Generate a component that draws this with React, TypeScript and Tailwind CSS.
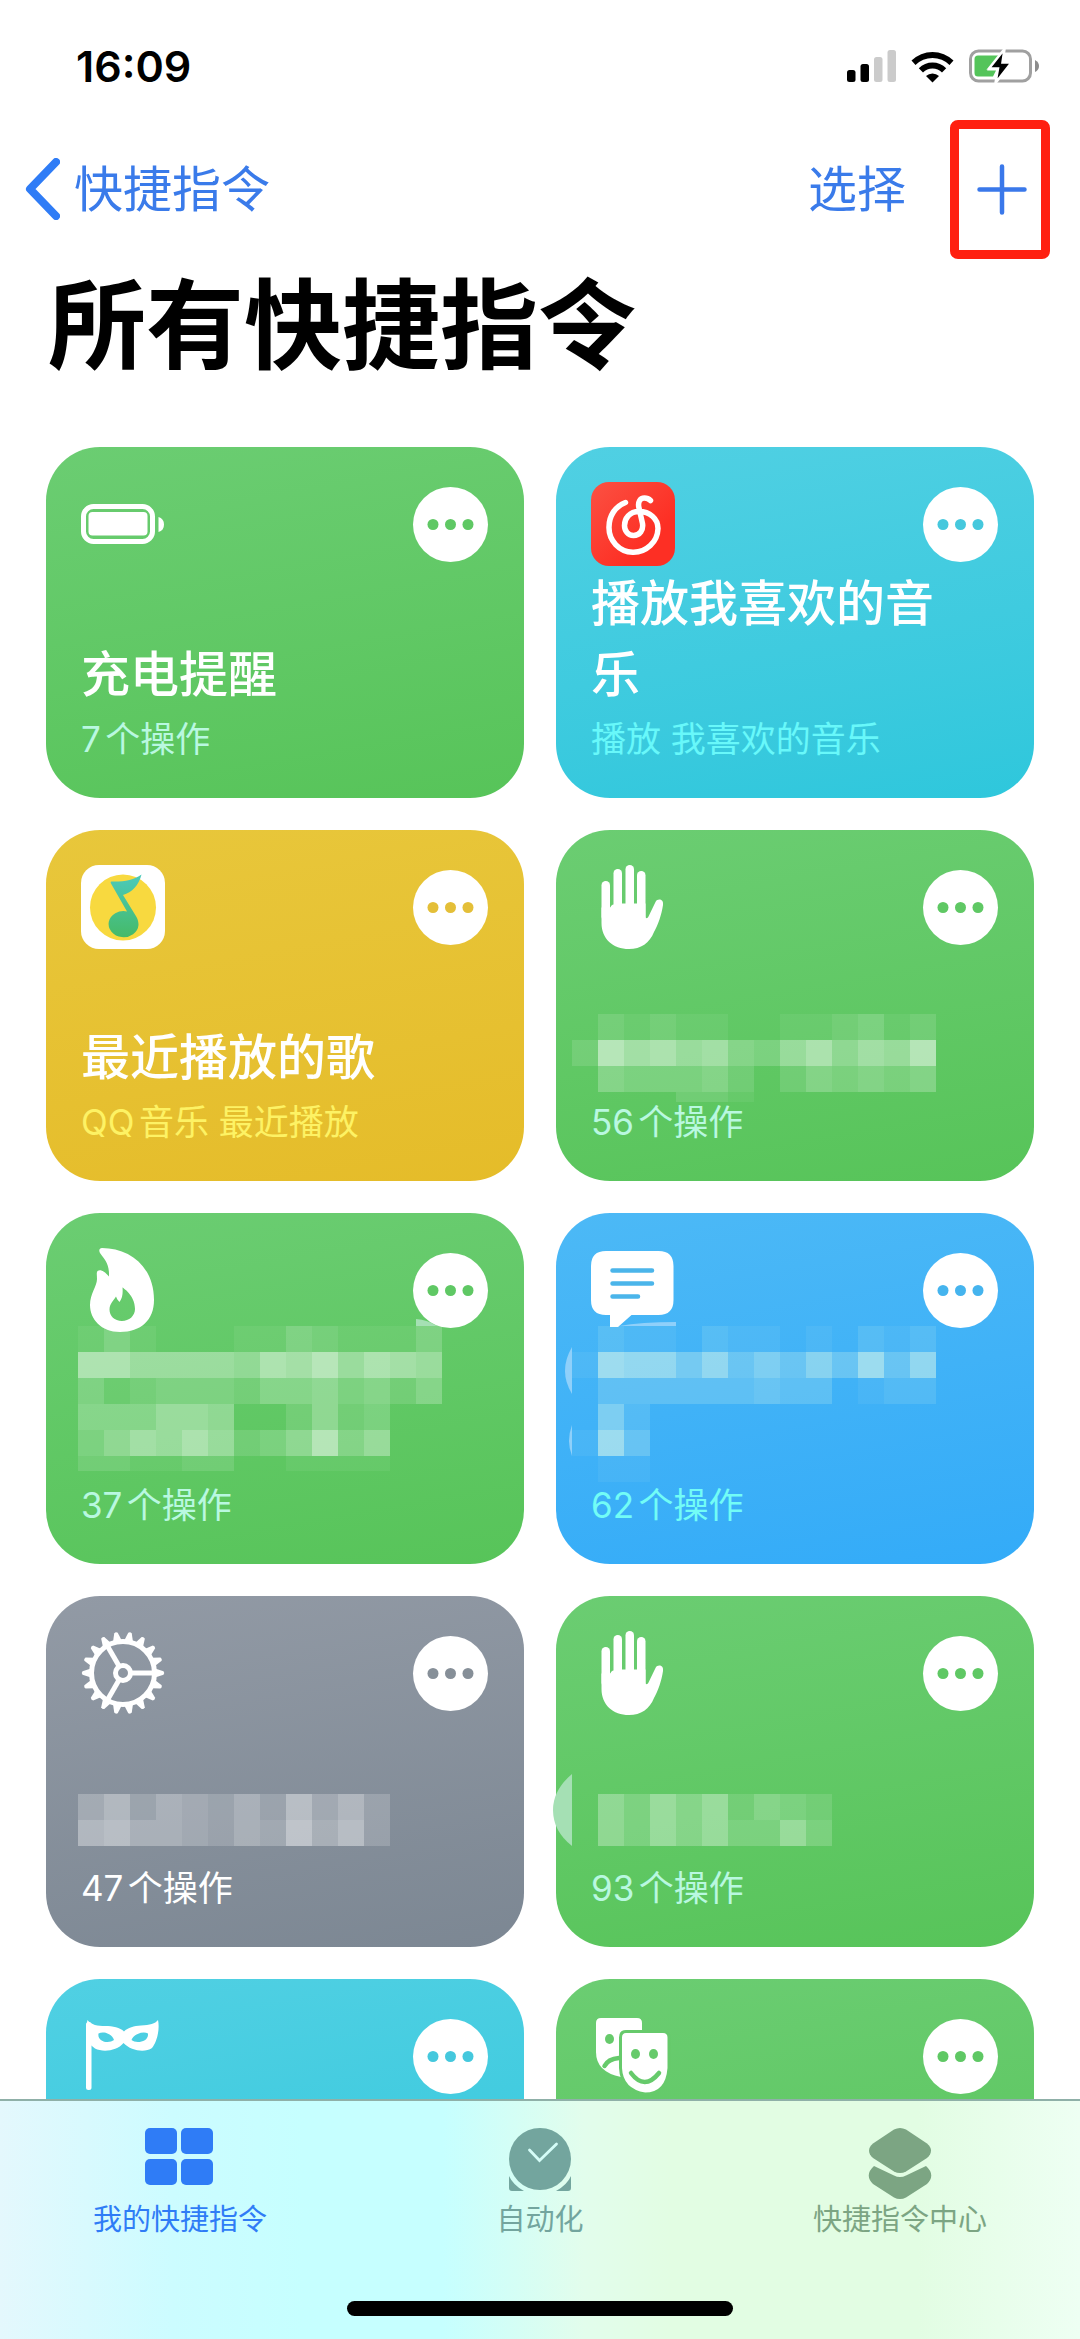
import type { ReactNode } from "react"

type Theme = "green" | "cyan" | "yellow" | "blue" | "gray"

type MosaicRow = { cells: string; height?: number }

type Mosaic = {
  x: number
  y: number
  tint: string
  rows: MosaicRow[]
  smudges?: string[]
}

type Shortcut = {
  id: string
  theme: Theme
  icon: ReactNode
  title?: string
  subtitle?: string
  mosaic?: Mosaic
}

const THEMES: Record<Theme, { card: string; dots: string; subtitle: string }> = {
  green: {
    card: "bg-linear-170 from-[#6bcd72] to-[#57c459]",
    dots: "text-[#5fc864]",
    subtitle: "text-[#b9f8e0]",
  },
  cyan: {
    card: "bg-linear-170 from-[#50d0e3] to-[#2ec7dc]",
    dots: "text-[#45c8dd]",
    subtitle: "text-[#68f8fa]",
  },
  yellow: {
    card: "bg-linear-170 from-[#e8c73b] to-[#e5bc29]",
    dots: "text-[#e4bf38]",
    subtitle: "text-[#fdf264]",
  },
  blue: {
    card: "bg-linear-170 from-[#4cb9f6] to-[#33abf8]",
    dots: "text-[#45b4ee]",
    subtitle: "text-[#72fcf6]",
  },
  gray: {
    card: "bg-linear-170 from-[#929aa5] to-[#7c8793]",
    dots: "text-[#868f98]",
    subtitle: "text-white",
  },
}

/* ---------- Card icons ---------- */

function CardIcon({ children }: { children: ReactNode }) {
  return (
    <svg viewBox="0 0 84 84" className="size-[84px] shrink-0" fill="#fff" aria-hidden="true">
      {children}
    </svg>
  )
}

const BatteryIcon = (
  <CardIcon>
    <rect x="2.5" y="24.5" width="69" height="35" rx="10" fill="none" stroke="#fff" strokeWidth="5" />
    <rect x="7.5" y="30" width="59" height="23.5" rx="4" />
    <path d="M77.5 35C81 36 83 38.500 83 42.500S81 49 77.500 50Z" />
  </CardIcon>
)

const NeteaseIcon = (
  <CardIcon>
    <defs>
      <linearGradient id="netease" x1="0" y1="0" x2="1" y2="1">
        <stop offset="0" stopColor="#fb5143" />
        <stop offset="0.7" stopColor="#fd2f24" />
      </linearGradient>
    </defs>
    <rect width="84" height="84" rx="18" fill="url(#netease)" />
    <path
      d="M34.500 20.500C24 24.500 18 34 18 45A24.500 24.500 0 0 0 67 46.500C67 36.500 58.500 29.500 48 29.500C38.500 29.500 33.500 36.500 33.500 43.500C33.500 49 37 53.500 42.500 53.500C49 53.500 52.500 48 51.500 41.500L48 26C46.500 20 49 16 53.500 16C56 16 58 17 59.500 18.500"
      fill="none"
      stroke="#fff"
      strokeWidth="5.500"
      strokeLinecap="round"
    />
  </CardIcon>
)

const QQMusicIcon = (
  <CardIcon>
    <defs>
      <linearGradient id="qqnote" x1="0" y1="0" x2="0" y2="1">
        <stop offset="0" stopColor="#4bcabc" />
        <stop offset="1" stopColor="#45ba68" />
      </linearGradient>
    </defs>
    <rect width="84" height="84" rx="18" />
    <circle cx="42" cy="42.500" r="33" fill="#f8d93f" />
    <path
      d="M30.500 16.500C42 17 53 15 60.500 9.500C58 20 51 27.500 42 30L55.500 52C57 55 57.500 57 57.500 60A15 13 0 1 1 46 46.500L30 18.500C29.500 17.500 29.500 16.500 30.500 16.500Z"
      fill="url(#qqnote)"
    />
  </CardIcon>
)

const HandIcon = (
  <CardIcon>
    <rect x="10.500" y="16" width="8.500" height="40" rx="4.200" />
    <rect x="22.500" y="4" width="8.500" height="50" rx="4.200" />
    <rect x="34.500" y="0" width="8.500" height="50" rx="4.200" />
    <rect x="46" y="6" width="8.500" height="50" rx="4.200" />
    <path d="M10.500 42.500H19C20 42.500 20 39.500 22.500 39.500L31 38.500H54.500V51C54.500 54 56.500 53.500 57.500 51.500L64.500 37C66.500 33 73 34 72 40C70.500 50 67 60 63 67C58.500 78 50 84 38 84C22 84 10.500 74 10.500 58Z" />
  </CardIcon>
)

const FlameIcon = (
  <CardIcon>
    <path
      fillRule="evenodd"
      d="M21 0C48 0 73 18 73 52C73 72 60 84 39 84C20 84 9 71 9 57C9 46 16 38 16 31C16 28 15.500 26 16 24C17 21 22 21 28 28.500C28.500 16 24 12 19 5C17.500 2 18.500 0 21 0ZM41.500 39.500C41.500 39.500 54 47 54 61C54 68 48 73 41 73C33.500 73 28.500 68 28.500 61.500C28.500 56 32 53 35 48.500C36 51 37 52.500 38.500 54C41.500 50 42 45 41.500 39.500Z"
    />
  </CardIcon>
)

const MessageIcon = (
  <CardIcon>
    <path d="M15 3H67.500Q82.500 3 82.500 18V52Q82.500 67 67.500 67H40.500L27 79H19V67H15Q0 67 0 52V18Q0 3 15 3Z" />
    <path d="M21.500 22.500H61M21.500 35.500H61M21.500 48.500H47" stroke="#4bb5ea" strokeWidth="4.500" strokeLinecap="round" />
  </CardIcon>
)

const GearIcon = (
  <CardIcon>
    <g fill="none" stroke="#fff">
      <circle cx="42" cy="42" r="31.500" strokeWidth="5" />
      <circle cx="42" cy="42" r="7.500" strokeWidth="5" />
      {[0, 120, 240].map((deg) => (
        <path key={deg} d="M50 42H72" strokeWidth="5" transform={`rotate(${deg} 42 42)`} />
      ))}
    </g>
    {Array.from({ length: 18 }, (_, i) => (
      <path
        key={i}
        d="M74 37.500L82.500 40.200Q84 42 82.500 43.800L74 46.500Z"
        transform={`rotate(${i * 20} 42 42)`}
      />
    ))}
  </CardIcon>
)

const MaskIcon = (
  <CardIcon>
    <rect x="5" y="8" width="5.500" height="68" rx="2.500" />
    <path
      fillRule="evenodd"
      d="M6.500 6C10 11 17 12 24 12C32 12 39 13.500 43 17.500C47 13.500 53 12 60 11.500C69 11 74 10 77 6C79 15 76 28 71 34C64 39 50 37 42.500 29C36 37 22 38.500 14 34.500L6 28Q4 14 6.500 6ZM17.500 19.500C23 17 31 20 33 26C28 30 16 28 17.500 19.500ZM67 19.500C62 17 53 20 50.500 26C55 30 68 28 67 19.500Z"
    />
  </CardIcon>
)

const TheaterIcon = (
  <CardIcon>
    <path d="M10 4H46Q51 4 51 9V40Q46 63 30 63Q5 58 5 38V9Q5 4 10 4Z" />
    <ellipse cx="18.500" cy="25" rx="4.500" ry="5" fill="#66ca6b" />
    <path d="M13.500 52Q17 45 28 44" fill="none" stroke="#66ca6b" strokeWidth="4.500" strokeLinecap="round" />
    <path
      d="M35 17.500H72Q78 17.500 78 23.500V54Q76 80 54 80Q30.500 76 29.500 54V23.500Q29.500 17.500 35 17.500Z"
      stroke="#66ca6b"
      strokeWidth="3"
    />
    <ellipse cx="44.500" cy="40" rx="4.500" ry="5" fill="#66ca6b" />
    <ellipse cx="62.500" cy="40" rx="4.500" ry="5" fill="#66ca6b" />
    <path d="M40 59Q53.500 77 68 59" fill="none" stroke="#66ca6b" strokeWidth="4.500" strokeLinecap="round" />
  </CardIcon>
)

/* ---------- Data ---------- */

const SHORTCUTS: Shortcut[] = [
  { id: "charge", theme: "green", icon: BatteryIcon, title: "充电提醒", subtitle: "7个操作" },
  { id: "netease", theme: "cyan", icon: NeteaseIcon, title: "播放我喜欢的音乐", subtitle: "播放 我喜欢的音乐" },
  { id: "qq", theme: "yellow", icon: QQMusicIcon, title: "最近播放的歌", subtitle: "QQ音乐 最近播放" },
  {
    id: "hand-1",
    theme: "green",
    icon: HandIcon,
    subtitle: "56个操作",
    mosaic: {
      x: 16,
      y: 184,
      tint: "#fff",
      rows: [
        { cells: "02121100112312" },
        { cells: "29786743685769" },
        { cells: "04333420243434" },
        { cells: "00002210000000", height: 10 },
      ],
    },
  },
  {
    id: "flame",
    theme: "green",
    icon: FlameIcon,
    subtitle: "37个操作",
    mosaic: {
      x: 32,
      y: 113,
      tint: "#fff",
      rows: [
        { cells: "13100011321113" },
        { cells: "88666658796876" },
        { cells: "31233324453424" },
        { cells: "444665002523" },
        { cells: "357686235946" },
        { cells: "221122001111", height: 15 },
      ],
      smudges: ["M370 106Q382 107 391 113H370Z"],
    },
  },
  {
    id: "message",
    theme: "blue",
    icon: MessageIcon,
    subtitle: "62个操作",
    mosaic: {
      x: 16,
      y: 113,
      tint: "#eaffe8",
      rows: [
        { cells: "02110211010212" },
        { cells: "19885846474948" },
        { cells: "03333334330122" },
        { cells: "062" },
        { cells: "194" },
        { cells: "011" },
      ],
      smudges: [
        "M16 134Q2 158 16 181Z",
        "M16 212Q10 228 16 243Z",
        "M63 113Q85 109 120 109V113Z",
      ],
    },
  },
  {
    id: "gear",
    theme: "gray",
    icon: GearIcon,
    subtitle: "47个操作",
    mosaic: {
      x: 32,
      y: 198,
      tint: "#fff",
      rows: [{ cells: "463543537463" }, { cells: "675543548573" }],
    },
  },
  {
    id: "hand-2",
    theme: "green",
    icon: HandIcon,
    subtitle: "93个操作",
    mosaic: {
      x: 42,
      y: 198,
      tint: "#fff",
      rows: [{ cells: "536462432" }, { cells: "536463363" }],
      smudges: ["M16 178Q-3 194 -3 214Q-3 235 16 250Z"],
    },
  },
  { id: "mask", theme: "cyan", icon: MaskIcon },
  { id: "theater", theme: "green", icon: TheaterIcon },
]

/* ---------- Pieces ---------- */

const CELL = 26

// every digit is a cell, the higher the lighter
function MosaicLayer({ mosaic }: { mosaic: Mosaic }) {
  return (
    <svg
      width="478"
      height="351"
      viewBox="0 0 478 351"
      className="pointer-events-none absolute left-0 top-0 overflow-visible"
      shapeRendering="crispEdges"
      aria-hidden="true"
    >
      {mosaic.rows.map((row, r) =>
        row.cells.split("").map((level, c) => (
          <rect
            key={`${r}-${c}`}
            x={mosaic.x + c * CELL}
            y={mosaic.y + r * CELL}
            width={CELL}
            height={row.height ?? CELL}
            fill={mosaic.tint}
            fillOpacity={Number(level) * 0.06}
          />
        ))
      )}
      {mosaic.smudges?.map((d) => (
        <path key={d} d={d} fill="#a5e0b4" className={mosaic.tint === "#fff" ? "" : "fill-[#8fd0fa]"} shapeRendering="auto" />
      ))}
    </svg>
  )
}

function ShortcutCard({ shortcut }: { shortcut: Shortcut }) {
  const theme = THEMES[shortcut.theme]

  return (
    <li className={`relative flex h-[351px] flex-col justify-between rounded-[54px] pb-[29px] pl-[35px] pr-9 pt-[35px] ${theme.card}`}>
      {shortcut.mosaic && <MosaicLayer mosaic={shortcut.mosaic} />}

      <div className="flex items-center justify-between">
        {shortcut.icon}
        <button type="button" aria-label="更多" className={`relative rounded-full bg-white ${theme.dots}`}>
          <svg viewBox="0 0 75 75" className="size-[75px]" fill="currentColor" aria-hidden="true">
            <circle cx="20" cy="37.500" r="5.500" />
            <circle cx="37.500" cy="37.500" r="5.500" />
            <circle cx="55" cy="37.500" r="5.500" />
          </svg>
        </button>
      </div>

      <div>
        {shortcut.title && (
          <h2 className="pr-6 text-[49px] font-medium leading-[71px] text-white">{shortcut.title}</h2>
        )}
        {shortcut.subtitle && (
          <p className={`text-[35px] leading-[59px] [text-autospace:normal] ${theme.subtitle}`}>{shortcut.subtitle}</p>
        )}
      </div>
    </li>
  )
}

function StatusBar() {
  return (
    <div className="flex h-[132px] items-center justify-between pl-[76px] pr-10">
      <span className="text-[43px] font-semibold leading-none text-black">16:09</span>
      <div className="flex items-center gap-[15px]">
        <svg width="49" height="32" viewBox="0 0 49 32" aria-label="信号">
          <rect x="0" y="20" width="8.500" height="12" rx="2.500" />
          <rect x="13.500" y="14" width="8.500" height="18" rx="2.500" />
          <rect x="27" y="7" width="8.500" height="25" rx="2.500" fill="#cbcbcb" />
          <rect x="40.500" y="0" width="8.500" height="32" rx="2.500" fill="#cbcbcb" />
        </svg>
        <svg width="43" height="33" viewBox="0 0 43 33" aria-label="Wi-Fi">
          <path d="M0.500 10.500A30 30 0 0 1 42.500 10.500L38.500 15A24 24 0 0 0 4.500 15Z" />
          <path d="M7.800 18.200A19.500 19.500 0 0 1 35.200 18.200L31 22.500A13.500 13.500 0 0 0 12 22.500Z" />
          <path d="M15 26A9.500 9.500 0 0 1 28 26L21.500 32.500Z" />
        </svg>
        <svg width="71" height="36" viewBox="0 0 71 36" aria-label="正在充电">
          <rect x="1.500" y="3" width="60" height="30" rx="8" fill="none" stroke="#a0a0a0" strokeWidth="3" />
          <path d="M66 12Q70 14 70 18T66 24Z" fill="#8c8c8c" />
          <path d="M9 7.500H31L18 22.500H27L24 28.500H9Q5.500 28.500 5.500 25V11Q5.500 7.500 9 7.500Z" fill="#54c45a" />
          <path d="M35.500 1L20 20.500H29L26.500 35L42.500 14.500H33.500Z" stroke="#fff" strokeWidth="2.500" />
        </svg>
      </div>
    </div>
  )
}

function NavBar() {
  return (
    <div className="flex h-[114px] items-center justify-between pl-[25px] pr-[30px] text-[49px] leading-none text-[#3a7bea]">
      <a href="#shortcuts" className="flex items-center gap-[14px]">
        <svg width="35" height="62" viewBox="0 0 35 62" fill="none" aria-hidden="true">
          <path d="M31 4L5 31L31 58" stroke="#2f7cf6" strokeWidth="8" strokeLinecap="round" strokeLinejoin="round" />
        </svg>
        快捷指令
      </a>
      <div className="flex items-center gap-11">
        <button type="button">选择</button>
        <button
          type="button"
          aria-label="添加"
          className="flex h-[139px] w-[100px] items-center justify-center rounded-lg border-9 border-[#ff2010] pl-1"
        >
          <svg width="50" height="51" viewBox="0 0 50 51" aria-hidden="true">
            <path d="M2.500 25.500H47.500M25 2.500V48.500" stroke="#3a78ea" strokeWidth="4.500" strokeLinecap="round" />
          </svg>
        </button>
      </div>
    </div>
  )
}

const TABS = [
  {
    label: "我的快捷指令",
    color: "text-[#2f7cf6]",
    icon: (
      <>
        <rect x="1" y="0" width="32" height="26" rx="5" />
        <rect x="37" y="0" width="32" height="26" rx="5" />
        <rect x="1" y="31" width="32" height="26" rx="5" />
        <rect x="37" y="31" width="32" height="26" rx="5" />
      </>
    ),
  },
  {
    label: "自动化",
    color: "text-[#73a59e]",
    icon: (
      <>
        <circle cx="36" cy="31" r="31" />
        <path d="M25.500 22L35.500 32.500L52.500 16" fill="none" stroke="#d5fdf8" strokeWidth="2.800" strokeLinecap="round" />
        <path d="M5 48Q9 57 20 63H8Q5 63 5 60ZM67 48Q63 57 52 63H64Q67 63 67 60Z" />
      </>
    ),
  },
  {
    label: "快捷指令中心",
    color: "text-[#7ca583]",
    icon: (
      <>
        <path d="M30 1.500Q36 -1.500 42 1.500L63 15.500Q71 22.500 63 30L42 43.500Q36 46.500 30 43.500L9 30Q1 22.500 9 15.500Z" />
        <path d="M10 38L30 47.500Q36 50.500 42 47.500L62 38Q72 47 63 56L42 69.500Q36 72.500 30 69.500L9 56Q0 47 10 38Z" />
      </>
    ),
  },
]

function TabBar() {
  return (
    <nav className="shrink-0 border-t-2 border-[#8fb0a8] bg-[linear-gradient(90deg,#e4f8fd,#ccfcff_16%,#c6ffff_28%,#c6ffff_41%,#e2fdec_54%,#e2fde3_62%,#e2fde3_85%,#eefff3)]">
      <ul className="flex pt-[27px]">
        {TABS.map((tab) => (
          <li key={tab.label} className="flex-1">
            <a href="#tab" className={`flex flex-col items-center text-[29px] leading-[40px] ${tab.color}`}>
              <svg width="72" height="72" viewBox="0 0 72 72" fill="currentColor" aria-hidden="true">
                {tab.icon}
              </svg>
              {tab.label}
            </a>
          </li>
        ))}
      </ul>
      <div className="flex justify-center pb-[23px] pt-[61px]">
        <div className="h-[15px] w-[386px] rounded-full bg-black" />
      </div>
    </nav>
  )
}

export default function App() {
  return (
    <div className="flex h-screen flex-col bg-white font-['Inter','Noto_Sans_CJK_SC',sans-serif]" lang="zh-CN">
      <header>
        <StatusBar />
        <NavBar />
      </header>

      <main className="min-h-0 flex-1 overflow-y-auto px-[46px] [scrollbar-width:none]">
        <h1 className="pb-[65px] pl-0.5 pt-6 text-[98px] font-bold leading-[112px] text-black">所有快捷指令</h1>
        <ul className="grid grid-cols-2 gap-8">
          {SHORTCUTS.map((shortcut) => (
            <ShortcutCard key={shortcut.id} shortcut={shortcut} />
          ))}
        </ul>
      </main>

      <TabBar />
    </div>
  )
}
